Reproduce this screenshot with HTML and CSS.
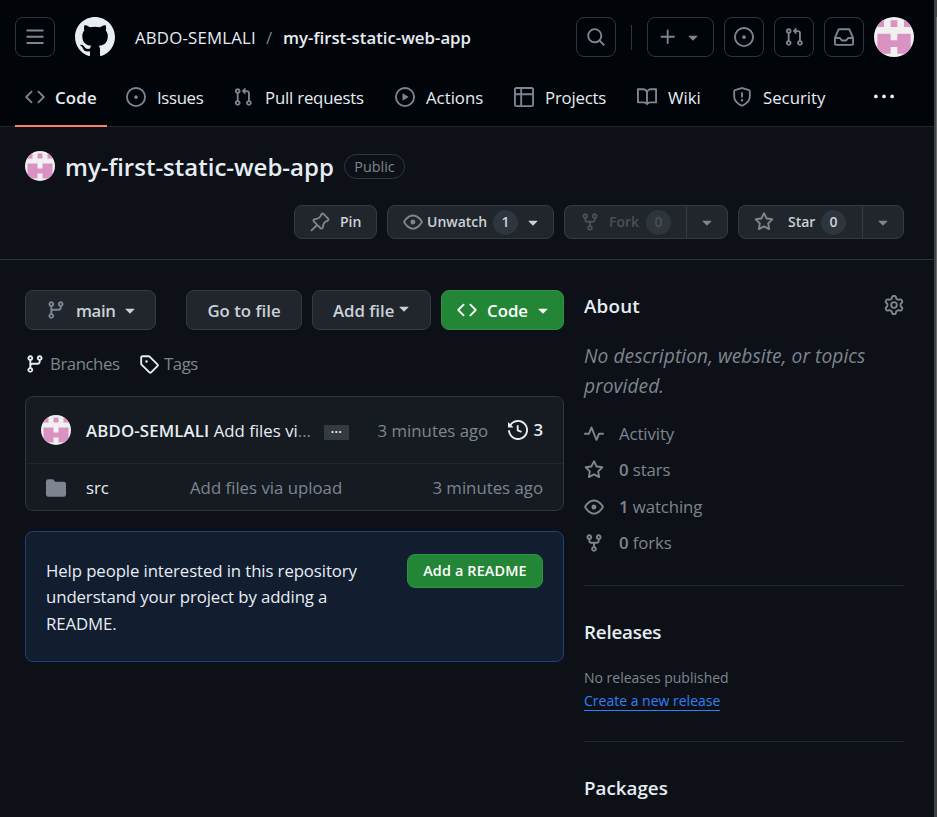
FILE: index.html
```html
<!DOCTYPE html>
<html lang="en">
<head>
<meta charset="utf-8">
<title>ABDO-SEMLALI/my-first-static-web-app</title>
<link rel="stylesheet" href="styles.css">
</head>
<body>
<svg class="sprite" aria-hidden="true">
  <symbol id="bars" viewBox="0 0 16 16"><path d="M1 2.75A.75.75 0 0 1 1.75 2h12.5a.75.75 0 0 1 0 1.5H1.75A.75.75 0 0 1 1 2.75Zm0 5A.75.75 0 0 1 1.75 7h12.5a.75.75 0 0 1 0 1.5H1.75A.75.75 0 0 1 1 7.75ZM1.75 12h12.5a.75.75 0 0 1 0 1.5H1.75a.75.75 0 0 1 0-1.5Z"/></symbol>
  <symbol id="mark" viewBox="0 0 16 16"><path d="M8 0c4.42 0 8 3.58 8 8a8.013 8.013 0 0 1-5.45 7.59c-.4.08-.55-.17-.55-.38 0-.27.01-1.13.01-2.2 0-.75-.25-1.23-.54-1.48 1.78-.2 3.65-.88 3.65-3.95 0-.88-.31-1.59-.82-2.15.08-.2.36-1.02-.08-2.12 0 0-.67-.22-2.2.82-.64-.18-1.32-.27-2-.27-.68 0-1.36.09-2 .27-1.53-1.03-2.2-.82-2.2-.82-.44 1.1-.16 1.92-.08 2.12-.51.56-.82 1.28-.82 2.15 0 3.06 1.86 3.75 3.64 3.95-.23.2-.44.55-.51 1.07-.46.21-1.61.55-2.33-.66-.15-.24-.6-.83-1.23-.82-.67.01-.27.38.01.53.34.19.73.9.82 1.13.16.45.68 1.31 2.69.94 0 .67.01 1.3.01 1.49 0 .21-.15.45-.55.38A7.995 7.995 0 0 1 0 8c0-4.42 3.58-8 8-8Z"/></symbol>
  <symbol id="search" viewBox="0 0 16 16"><path d="M10.68 11.74a6 6 0 0 1-7.922-8.982 6 6 0 0 1 8.982 7.922l3.04 3.04a.749.749 0 0 1-.326 1.275.749.749 0 0 1-.734-.215ZM11.5 7a4.499 4.499 0 1 0-8.997 0A4.499 4.499 0 0 0 11.5 7Z"/></symbol>
  <symbol id="plus" viewBox="0 0 16 16"><path d="M7.75 2a.75.75 0 0 1 .75.75V7h4.25a.75.75 0 0 1 0 1.5H8.5v4.25a.75.75 0 0 1-1.5 0V8.5H2.75a.75.75 0 0 1 0-1.5H7V2.75A.75.75 0 0 1 7.75 2Z"/></symbol>
  <symbol id="down" viewBox="0 0 16 16"><path d="m4.427 7.427 3.396 3.396a.25.25 0 0 0 .354 0l3.396-3.396A.25.25 0 0 0 11.396 7H4.604a.25.25 0 0 0-.177.427Z"/></symbol>
  <symbol id="issue" viewBox="0 0 16 16"><path d="M8 9.5a1.5 1.5 0 1 0 0-3 1.5 1.5 0 0 0 0 3Z"/><path d="M8 0a8 8 0 1 1 0 16A8 8 0 0 1 8 0ZM1.5 8a6.5 6.5 0 1 0 13 0 6.5 6.5 0 0 0-13 0Z"/></symbol>
  <symbol id="pr" viewBox="0 0 16 16"><path d="M1.5 3.25a2.25 2.25 0 1 1 3 2.122v5.256a2.251 2.251 0 1 1-1.5 0V5.372A2.25 2.25 0 0 1 1.5 3.25Zm5.677-.177L9.573.677A.25.25 0 0 1 10 .854V2.5h1A2.5 2.5 0 0 1 13.5 5v5.628a2.251 2.251 0 1 1-1.5 0V5a1 1 0 0 0-1-1h-1v1.646a.25.25 0 0 1-.427.177L7.177 3.427a.25.25 0 0 1 0-.354ZM3.75 2.5a.75.75 0 1 0 0 1.5.75.75 0 0 0 0-1.5Zm0 9.5a.75.75 0 1 0 0 1.5.75.75 0 0 0 0-1.5Zm8.25.75a.75.75 0 1 0 1.5 0 .75.75 0 0 0-1.5 0Z"/></symbol>
  <symbol id="inbox" viewBox="0 0 16 16"><path d="M2.8 2.06A1.75 1.75 0 0 1 4.41 1h7.18c.7 0 1.333.417 1.61 1.06l2.74 6.395c.04.093.06.194.06.295v4.5A1.75 1.75 0 0 1 14.25 15H1.75A1.75 1.75 0 0 1 0 13.25v-4.5c0-.101.02-.202.06-.295Zm1.61.44a.25.25 0 0 0-.23.152L1.887 8H4.75a.75.75 0 0 1 .6.3L6.625 10h2.75l1.275-1.7a.75.75 0 0 1 .6-.3h2.863L11.82 2.652a.25.25 0 0 0-.23-.152Zm10.09 7h-2.875l-1.275 1.7a.75.75 0 0 1-.6.3h-3.5a.75.75 0 0 1-.6-.3L4.375 9.5H1.5v3.75c0 .138.112.25.25.25h12.5a.25.25 0 0 0 .25-.25Z"/></symbol>
  <symbol id="code" viewBox="0 0 16 16"><path d="m11.28 3.22 4.25 4.25a.75.75 0 0 1 0 1.06l-4.25 4.25a.749.749 0 0 1-1.275-.326.749.749 0 0 1 .215-.734L13.94 8l-3.72-3.72a.749.749 0 0 1 .326-1.275.749.749 0 0 1 .734.215Zm-6.56 0a.751.751 0 0 1 1.042.018.751.751 0 0 1 .018 1.042L2.06 8l3.72 3.72a.749.749 0 0 1-.326 1.275.749.749 0 0 1-.734-.215L.47 8.53a.75.75 0 0 1 0-1.06Z"/></symbol>
  <symbol id="play" viewBox="0 0 16 16"><path d="M8 0a8 8 0 1 1 0 16A8 8 0 0 1 8 0ZM1.5 8a6.5 6.5 0 1 0 13 0 6.5 6.5 0 0 0-13 0Zm4.879-2.773 4.264 2.559a.25.25 0 0 1 0 .428l-4.264 2.559A.25.25 0 0 1 6 10.559V5.442a.25.25 0 0 1 .379-.215Z"/></symbol>
  <symbol id="table" viewBox="0 0 16 16"><path d="M0 1.75C0 .784.784 0 1.75 0h12.5C15.216 0 16 .784 16 1.75v12.5A1.75 1.75 0 0 1 14.25 16H1.75A1.75 1.75 0 0 1 0 14.25ZM6.5 6.5v8h7.75a.25.25 0 0 0 .25-.25V6.5Zm8-1.5V1.75a.25.25 0 0 0-.25-.25H6.5V5Zm-13 1.5v7.75c0 .138.112.25.25.25H5v-8ZM5 5V1.5H1.75a.25.25 0 0 0-.25.25V5Z"/></symbol>
  <symbol id="book" viewBox="0 0 16 16"><path d="M0 1.75A.75.75 0 0 1 .75 1h4.253c1.227 0 2.317.59 3 1.501A3.743 3.743 0 0 1 11.006 1h4.245a.75.75 0 0 1 .75.75v10.5a.75.75 0 0 1-.75.75h-4.507a2.25 2.25 0 0 0-1.591.659l-.622.621a.75.75 0 0 1-1.06 0l-.622-.621A2.25 2.25 0 0 0 5.258 13H.75a.75.75 0 0 1-.75-.75Zm7.251 10.324.004-5.073-.002-2.253A2.25 2.25 0 0 0 5.003 2.5H1.5v9h3.757a3.75 3.75 0 0 1 1.994.574ZM8.755 4.75l-.004 7.322a3.752 3.752 0 0 1 1.992-.572H14.5v-9h-3.495a2.25 2.25 0 0 0-2.25 2.25Z"/></symbol>
  <symbol id="shield" viewBox="0 0 16 16"><path d="M7.467.133a1.748 1.748 0 0 1 1.066 0l5.25 1.68A1.75 1.75 0 0 1 15 3.48V7c0 1.566-.32 3.182-1.303 4.682-.983 1.498-2.585 2.813-5.032 3.855a1.697 1.697 0 0 1-1.33 0c-2.447-1.042-4.049-2.357-5.032-3.855C1.32 10.182 1 8.566 1 7V3.48a1.75 1.75 0 0 1 1.217-1.667Zm.61 1.429a.25.25 0 0 0-.153 0l-5.25 1.68a.25.25 0 0 0-.174.238V7c0 1.358.275 2.666 1.057 3.86.784 1.194 2.121 2.34 4.366 3.297a.196.196 0 0 0 .154 0c2.245-.956 3.582-2.104 4.366-3.298C13.225 9.666 13.5 8.36 13.5 7V3.48a.251.251 0 0 0-.174-.237l-5.25-1.68ZM8.75 4.75v3a.75.75 0 0 1-1.5 0v-3a.75.75 0 0 1 1.5 0ZM9 10.5a1 1 0 1 1-2 0 1 1 0 0 1 2 0Z"/></symbol>
  <symbol id="kebab" viewBox="0 0 16 16"><circle cx="1.5" cy="7.5" r="1.5"/><circle cx="8" cy="7.5" r="1.5"/><circle cx="14.5" cy="7.5" r="1.5"/></symbol>
  <symbol id="pin" viewBox="0 0 16 16"><path d="m11.294.984 3.722 3.722a1.75 1.75 0 0 1-.504 2.826l-1.327.613a3.089 3.089 0 0 0-1.707 2.084l-.584 2.454c-.317 1.332-1.972 1.8-2.94.832L5.75 11.311 1.78 15.28a.749.749 0 1 1-1.06-1.06l3.969-3.97-2.204-2.204c-.968-.968-.5-2.623.832-2.94l2.454-.584a3.08 3.08 0 0 0 2.084-1.707l.613-1.327a1.75 1.75 0 0 1 2.826-.504ZM6.283 9.723l2.732 2.731a.25.25 0 0 0 .42-.119l.584-2.454a4.586 4.586 0 0 1 2.537-3.098l1.328-.613a.25.25 0 0 0 .072-.404l-3.722-3.722a.25.25 0 0 0-.404.072l-.613 1.328a4.584 4.584 0 0 1-3.098 2.537l-2.454.584a.25.25 0 0 0-.119.42l2.731 2.732Z"/></symbol>
  <symbol id="eye" viewBox="0 0 16 16"><path d="M8 2c1.981 0 3.671.992 4.933 2.078 1.27 1.091 2.187 2.345 2.637 3.023a1.62 1.62 0 0 1 0 1.798c-.45.678-1.367 1.932-2.637 3.023C11.67 13.008 9.981 14 8 14c-1.981 0-3.671-.992-4.933-2.078C1.797 10.83.88 9.576.43 8.898a1.62 1.62 0 0 1 0-1.798c.45-.677 1.367-1.931 2.637-3.022C4.33 2.992 6.019 2 8 2ZM1.679 7.932a.12.12 0 0 0 0 .136c.411.622 1.241 1.75 2.366 2.717C5.176 11.758 6.527 12.5 8 12.5c1.473 0 2.825-.742 3.955-1.715 1.124-.967 1.954-2.096 2.366-2.717a.12.12 0 0 0 0-.136c-.412-.621-1.242-1.75-2.366-2.717C10.824 4.242 9.473 3.5 8 3.5c-1.473 0-2.825.742-3.955 1.715-1.124.967-1.954 2.096-2.366 2.717ZM8 10a2 2 0 1 1-.001-3.999A2 2 0 0 1 8 10Z"/></symbol>
  <symbol id="fork" viewBox="0 0 16 16"><path d="M5 5.372v.878c0 .414.336.75.75.75h4.5a.75.75 0 0 0 .75-.75v-.878a2.25 2.25 0 1 1 1.5 0v.878a2.25 2.25 0 0 1-2.25 2.25h-1.5v2.128a2.251 2.251 0 1 1-1.5 0V8.5h-1.5A2.25 2.25 0 0 1 3.5 6.25v-.878a2.25 2.25 0 1 1 1.5 0ZM5 3.25a.75.75 0 1 0-1.5 0 .75.75 0 0 0 1.5 0Zm6.75.75a.75.75 0 1 0 0-1.5.75.75 0 0 0 0 1.5Zm-3 8.75a.75.75 0 1 0-1.5 0 .75.75 0 0 0 1.5 0Z"/></symbol>
  <symbol id="star" viewBox="0 0 16 16"><path d="M8 .25a.75.75 0 0 1 .673.418l1.882 3.815 4.21.612a.75.75 0 0 1 .416 1.279l-3.046 2.97.719 4.192a.751.751 0 0 1-1.088.791L8 12.347l-3.766 1.98a.75.75 0 0 1-1.088-.79l.72-4.194L.818 6.374a.75.75 0 0 1 .416-1.28l4.21-.611L7.327.668A.75.75 0 0 1 8 .25Zm0 2.445L6.615 5.5a.75.75 0 0 1-.564.41l-3.097.45 2.24 2.184a.75.75 0 0 1 .216.664l-.528 3.084 2.769-1.456a.75.75 0 0 1 .698 0l2.77 1.456-.53-3.084a.75.75 0 0 1 .216-.664l2.24-2.183-3.096-.45a.75.75 0 0 1-.564-.41L8 2.694Z"/></symbol>
  <symbol id="gear" viewBox="0 0 16 16"><path d="M8 0a8.2 8.2 0 0 1 .701.031C9.444.095 9.99.645 10.16 1.29l.288 1.107c.018.066.079.158.212.224.231.114.454.243.668.386.123.082.233.09.299.071l1.103-.303c.644-.176 1.392.021 1.82.63.27.385.506.792.704 1.218.315.675.111 1.422-.364 1.891l-.814.806c-.049.048-.098.147-.088.294.016.257.016.515 0 .772-.01.147.038.246.088.294l.814.806c.475.469.679 1.216.364 1.891a7.977 7.977 0 0 1-.704 1.217c-.428.61-1.176.807-1.82.63l-1.102-.302c-.067-.019-.177-.011-.3.071a5.909 5.909 0 0 1-.668.386c-.133.066-.194.158-.211.224l-.29 1.106c-.168.646-.715 1.196-1.458 1.26a8.006 8.006 0 0 1-1.402 0c-.743-.064-1.289-.614-1.458-1.26l-.289-1.106c-.018-.066-.079-.158-.212-.224a5.738 5.738 0 0 1-.668-.386c-.123-.082-.233-.09-.299-.071l-1.103.303c-.644.176-1.392-.021-1.82-.63a8.12 8.12 0 0 1-.704-1.218c-.315-.675-.111-1.422.363-1.891l.815-.806c.05-.048.098-.147.088-.294a6.214 6.214 0 0 1 0-.772c.01-.147-.038-.246-.088-.294l-.815-.806C.635 6.045.431 5.298.746 4.623a7.92 7.92 0 0 1 .704-1.217c.428-.61 1.176-.807 1.82-.63l1.102.302c.067.019.177.011.3-.071.214-.143.437-.272.668-.386.133-.066.194-.158.211-.224l.29-1.106C6.009.645 6.556.095 7.299.03 7.53.01 7.764 0 8 0Zm-.571 1.525c-.036.003-.108.036-.137.146l-.289 1.105c-.147.561-.549.967-.998 1.189-.173.086-.34.183-.5.29-.417.278-.97.423-1.529.27l-1.103-.303c-.109-.03-.175.016-.195.045-.22.312-.412.644-.573.99-.014.031-.021.11.059.19l.815.806c.411.406.562.957.53 1.456a4.709 4.709 0 0 0 0 .582c.032.499-.119 1.05-.53 1.456l-.815.806c-.081.08-.073.159-.059.19.162.346.353.677.573.989.02.03.085.076.195.046l1.102-.303c.56-.153 1.113-.008 1.53.27.161.107.328.204.501.29.447.222.85.629.997 1.189l.289 1.105c.029.109.101.143.137.146a6.6 6.6 0 0 0 1.142 0c.036-.003.108-.036.137-.146l.289-1.105c.147-.561.549-.967.998-1.189.173-.086.34-.183.5-.29.417-.278.97-.423 1.529-.27l1.103.303c.109.029.175-.016.195-.045.22-.313.411-.644.573-.99.014-.031.021-.11-.059-.19l-.815-.806c-.411-.406-.562-.957-.53-1.456a4.709 4.709 0 0 0 0-.582c-.032-.499.119-1.05.53-1.456l.815-.806c.081-.08.073-.159.059-.19a6.464 6.464 0 0 0-.573-.989c-.02-.03-.085-.076-.195-.046l-1.102.303c-.56.153-1.113.008-1.53-.27a4.44 4.44 0 0 0-.501-.29c-.447-.222-.85-.629-.997-1.189l-.289-1.105c-.029-.11-.101-.143-.137-.146a6.6 6.6 0 0 0-1.142 0ZM11 8a3 3 0 1 1-6 0 3 3 0 0 1 6 0ZM9.5 8a1.5 1.5 0 1 0-3.001.001A1.5 1.5 0 0 0 9.5 8Z"/></symbol>
  <symbol id="branch" viewBox="0 0 16 16"><path d="M9.5 3.25a2.25 2.25 0 1 1 3 2.122V6A2.5 2.5 0 0 1 10 8.5H6a1 1 0 0 0-1 1v1.128a2.251 2.251 0 1 1-1.5 0V5.372a2.25 2.25 0 1 1 1.5 0v1.836A2.493 2.493 0 0 1 6 7h4a1 1 0 0 0 1-1v-.628A2.25 2.25 0 0 1 9.5 3.25Zm-6 0a.75.75 0 1 0 1.5 0 .75.75 0 0 0-1.5 0Zm8.25-.75a.75.75 0 1 0 0 1.5.75.75 0 0 0 0-1.5ZM4.25 12a.75.75 0 1 0 0 1.5.75.75 0 0 0 0-1.5Z"/></symbol>
  <symbol id="tag" viewBox="0 0 16 16"><path d="M1 7.775V2.75C1 1.784 1.784 1 2.75 1h5.025c.464 0 .91.184 1.238.513l6.25 6.25a1.75 1.75 0 0 1 0 2.474l-5.026 5.026a1.75 1.75 0 0 1-2.474 0l-6.25-6.25A1.752 1.752 0 0 1 1 7.775Zm1.5 0c0 .066.026.13.073.177l6.25 6.25a.25.25 0 0 0 .354 0l5.025-5.025a.25.25 0 0 0 0-.354l-6.25-6.25a.25.25 0 0 0-.177-.073H2.75a.25.25 0 0 0-.25.25ZM6 5a1 1 0 1 1 0 2 1 1 0 0 1 0-2Z"/></symbol>
  <symbol id="history" viewBox="0 0 16 16"><path d="m.427 1.927 1.215 1.215a8.002 8.002 0 1 1-1.6 5.685.75.75 0 1 1 1.493-.154 6.5 6.5 0 1 0 1.18-4.458l1.358 1.358A.25.25 0 0 1 3.896 6H.25A.25.25 0 0 1 0 5.75V2.104a.25.25 0 0 1 .427-.177ZM7.75 4a.75.75 0 0 1 .75.75v2.992l2.028.812a.75.75 0 0 1-.557 1.392l-2.5-1A.751.751 0 0 1 7 8.25v-3.5A.75.75 0 0 1 7.75 4Z"/></symbol>
  <symbol id="folder" viewBox="0 0 16 16"><path d="M1.75 1A1.75 1.75 0 0 0 0 2.75v10.5C0 14.216.784 15 1.75 15h12.5A1.75 1.75 0 0 0 16 13.25v-8.5A1.75 1.75 0 0 0 14.25 3H7.5a.25.25 0 0 1-.2-.1l-.9-1.2C6.07 1.26 5.55 1 5 1H1.75Z"/></symbol>
  <symbol id="pulse" viewBox="0 0 16 16"><path d="M6 2c.306 0 .582.187.696.471L10 10.731l1.304-3.26A.751.751 0 0 1 12 7h3.25a.75.75 0 0 1 0 1.5h-2.742l-1.812 4.528a.751.751 0 0 1-1.392 0L6 4.77 4.696 8.03A.75.75 0 0 1 4 8.5H.75a.75.75 0 0 1 0-1.5h2.742l1.812-4.529A.751.751 0 0 1 6 2Z"/></symbol>
  <symbol id="avatar" viewBox="0 0 12 12"><path fill="#f0f0f0" d="M0 0h12v12H0z"/><path fill="#d992c1" d="M1 1h2v2H1zM5 1h2v2H5zM9 1h2v2H9zM1 5h4v2h2V5h4v6H7V9H5v2H1z"/></symbol>
</svg>

<div class="page">
  <header class="header">
    <div class="topbar">
      <button class="hbtn"><svg class="icon"><use href="#bars"/></svg></button>
      <svg class="logo"><use href="#mark"/></svg>
      <div class="crumbs"><span class="owner">ABDO-SEMLALI</span><span class="slash">/</span><b class="repo">my-first-static-web-app</b></div>
      <button class="hbtn search"><svg class="icon"><use href="#search"/></svg></button>
      <span class="vline"></span>
      <button class="hbtn create"><svg class="icon"><use href="#plus"/></svg><svg class="icon"><use href="#down"/></svg></button>
      <button class="hbtn"><svg class="icon"><use href="#issue"/></svg></button>
      <button class="hbtn"><svg class="icon"><use href="#pr"/></svg></button>
      <button class="hbtn"><svg class="icon"><use href="#inbox"/></svg></button>
      <svg class="avatar lg"><use href="#avatar"/></svg>
    </div>
    <nav class="tabs">
      <a class="tab active"><svg class="icon"><use href="#code"/></svg><b>Code</b></a>
      <a class="tab tight"><svg class="icon"><use href="#issue"/></svg><span>Issues</span></a>
      <a class="tab snug pulls"><svg class="icon"><use href="#pr"/></svg><span>Pull requests</span></a>
      <a class="tab"><svg class="icon"><use href="#play"/></svg><span>Actions</span></a>
      <a class="tab snug"><svg class="icon"><use href="#table"/></svg><span>Projects</span></a>
      <a class="tab"><svg class="icon"><use href="#book"/></svg><span>Wiki</span></a>
      <a class="tab"><svg class="icon"><use href="#shield"/></svg><span>Security</span></a>
      <a class="tab more"><svg class="icon"><use href="#kebab"/></svg></a>
    </nav>
  </header>

  <section class="repohead">
    <div class="titlerow">
      <svg class="avatar"><use href="#avatar"/></svg>
      <h1>my-first-static-web-app</h1>
      <span class="pill">Public</span>
    </div>
    <div class="actions">
      <button class="btn sm pin"><svg class="icon"><use href="#pin"/></svg><b>Pin</b></button>
      <button class="btn sm watch"><svg class="icon"><use href="#eye"/></svg><b>Unwatch</b><i class="count">1</i><svg class="icon caret"><use href="#down"/></svg></button>
      <div class="split forks"><button class="btn sm off"><svg class="icon"><use href="#fork"/></svg><b>Fork</b><i class="count">0</i></button><button class="btn sm drop"><svg class="icon"><use href="#down"/></svg></button></div>
      <div class="split stars"><button class="btn sm"><svg class="icon"><use href="#star"/></svg><b>Star</b><i class="count">0</i></button><button class="btn sm drop"><svg class="icon"><use href="#down"/></svg></button></div>
    </div>
  </section>

  <div class="content">
    <main class="main">
      <div class="filebar">
        <button class="btn ref"><svg class="icon"><use href="#branch"/></svg><b>main</b><svg class="icon caret"><use href="#down"/></svg></button>
        <button class="btn goto"><b>Go to file</b></button>
        <button class="btn add"><b>Add file</b><svg class="icon caret"><use href="#down"/></svg></button>
        <button class="btn green get"><svg class="icon"><use href="#code"/></svg><b>Code</b><svg class="icon"><use href="#down"/></svg></button>
      </div>
      <div class="refs">
        <a><svg class="icon"><use href="#branch"/></svg><span>Branches</span></a>
        <a><svg class="icon"><use href="#tag"/></svg><span>Tags</span></a>
      </div>
      <div class="files">
        <div class="commit">
          <svg class="avatar"><use href="#avatar"/></svg>
          <div class="msg"><b>ABDO-SEMLALI</b> <span>Add files vi</span><span class="muted">...</span></div>
          <button class="dots"><b>…</b></button>
          <span class="when muted">3 minutes ago</span>
          <a class="hist"><svg class="icon"><use href="#history"/></svg><b>3</b></a>
        </div>
        <div class="file">
          <svg class="icon"><use href="#folder"/></svg>
          <span class="name">src</span>
          <span class="desc muted">Add files via upload</span>
          <span class="muted">3 minutes ago</span>
        </div>
      </div>
      <div class="readme">
        <p>Help people interested in this repository<br>understand your project by adding a<br>README.</p>
        <button class="btn sm green"><b>Add a README</b></button>
      </div>
    </main>
    <aside class="side">
      <section class="about">
        <div class="sidehead"><h2>About</h2><svg class="icon"><use href="#gear"/></svg></div>
        <p class="nodesc">No description, website, or topics<br>provided.</p>
        <ul>
          <li><svg class="icon"><use href="#pulse"/></svg><span>Activity</span></li>
          <li><svg class="icon"><use href="#star"/></svg><span><b>0</b> stars</span></li>
          <li><svg class="icon"><use href="#eye"/></svg><span><b>1</b> watching</span></li>
          <li><svg class="icon"><use href="#fork"/></svg><span><b>0</b> forks</span></li>
        </ul>
      </section>
      <section class="releases">
        <h2>Releases</h2>
        <p>No releases published</p>
        <a class="link">Create a new release</a>
      </section>
      <section class="packages"><h2>Packages</h2></section>
    </aside>
  </div>
</div>
<div class="scroll"><div class="thumb"></div></div>
</body>
</html>
```
FILE: styles.css
```css
* { box-sizing: border-box; }

body {
  margin: 0;
  display: flex;
  height: 817px;
  overflow: hidden;
  background: #0d1117;
  color: #e6edf3;
  font: 16.8px/26px "Open Sans", "Noto Sans", sans-serif;
}

b, h1, h2 { font-weight: 600; }
h1, h2, p, ul { margin: 0; padding: 0; }
ul { list-style: none; }
button { font: inherit; color: inherit; padding: 0; margin: 0; background: none; border: 0; }

.sprite { position: absolute; width: 0; height: 0; }
.icon { width: 20px; height: 20px; flex: none; fill: #7d8590; display: block; }
.muted { color: #7d8590; }
.avatar { width: 30px; height: 30px; border-radius: 50%; flex: none; display: block; }
.avatar.lg { width: 40px; height: 40px; }

.page { width: 934px; flex: none; white-space: nowrap; }
.scroll { width: 3px; height: 817px; background: #424242; padding: 17px 0 0 2px; }
.thumb { height: 573px; background: #686868; }

.header { height: 127px; background: #010409; border-bottom: 1px solid #21262d; padding-top: 17px; }
.topbar { display: flex; align-items: center; height: 40px; padding: 0 20px 0 15px; gap: 10px; }
.hbtn { width: 40px; height: 40px; flex: none; border: 1px solid #30363d; border-radius: 8px; display: flex; align-items: center; justify-content: center; }
.logo { width: 40px; height: 40px; fill: #e6edf3; margin: 0 10px; flex: none; }
.crumbs { display: flex; flex: 1; padding-top: 1px; }
.owner { width: 131px; letter-spacing: .2px; }
.slash { width: 17px; color: #7d8590; }
.vline { width: 1px; height: 25px; background: #30363d; margin: 0 5px; }
.create { width: 67px; gap: 5px; }

.tabs { display: grid; grid-template-columns: 101px 107px 162px 119px 123px 95px 142px 40px; padding-left: 15px; margin-top: 20px; height: 50px; }
.tab { display: flex; align-items: center; gap: 11px; padding-left: 10px; height: 40px; }
.tab span, .tab b { padding-top: 1px; }
.tab.active { width: 92px; height: 50px; padding-bottom: 8px; gap: 10px; letter-spacing: .2px; border-bottom: 2px solid #f78166; }
.tight { letter-spacing: -.35px; }
.snug { letter-spacing: -.2px; }
.pulls { gap: 12px; }
.more .icon { fill: #e6edf3; }

.repohead { height: 133px; padding: 24px 30px 0 25px; border-bottom: 1px solid #30363d; }
.titlerow { display: flex; align-items: center; height: 30px; }
h1 { font-size: 24px; line-height: 30px; padding-top: 1px; margin-left: 10px; width: 279px; }
.pill { width: 61px; height: 25px; border: 1px solid #30363d; border-radius: 13px; font-size: 14.4px; line-height: 23px; color: #7d8590; text-align: center; }
.actions { display: flex; justify-content: flex-end; gap: 10px; margin-top: 24px; }

.btn { height: 40px; display: flex; align-items: center; flex: none; background: #21262d; border: 1px solid #363b42; border-radius: 8px; color: #c9d1d9; }
.btn.sm { height: 34px; font-size: 14px; }
.green { background: #238636; border-color: #2f9142; color: #fff; }
.green .icon { fill: #fff; }
.green.sm { font-size: 14.4px; letter-spacing: .15px; }
.caret { fill: #c9d1d9; }
.count { width: 25px; height: 25px; border-radius: 50%; background: #2f353c; font-style: normal; font-weight: 600; line-height: 24px; text-align: center; }
.pin { width: 83px; padding-left: 15px; }
.pin b { margin-left: 10px; }
.watch { width: 167px; padding-left: 15px; }
.watch b { width: 66px; margin-left: 4px; text-align: left; }
.watch .caret { margin-left: 5px; }
.split { display: flex; }
.split b { text-align: left; }
.split .btn { padding-left: 15px; }
.split .btn:first-child { border-radius: 8px 0 0 8px; border-right: 0; }
.split .drop { width: 42px; padding-left: 10px; border-radius: 0 8px 8px 0; }
.forks .btn:first-child { width: 122px; }
.forks b { width: 37px; margin-left: 9px; }
.stars .btn:first-child { width: 124px; }
.stars b { width: 33px; margin-left: 14px; }
.off { color: #484f58; }
.off .icon { fill: #484f58; }

.content { display: flex; gap: 20px; padding: 30px 30px 0 25px; }
.main { width: 539px; flex: none; }
.filebar { display: flex; gap: 10px; }
.filebar b { padding-top: 1px; text-align: left; }
.ref { width: 131px; margin-right: 20px; padding-left: 20px; }
.ref b { width: 43px; margin-left: 10px; letter-spacing: -.4px; }
.ref .caret { margin-left: 1px; }
.goto { width: 116px; justify-content: center; }
.add { width: 119px; padding-left: 20px; }
.add .caret { margin: -4px 0 0 0; }
.get { width: 123px; padding-left: 15px; }
.get b { margin-left: 10px; width: 46px; }

.refs { display: flex; margin-top: 21px; height: 26px; color: #7d8590; letter-spacing: -.45px; }
.refs a { display: flex; align-items: center; width: 114px; gap: 5px; }
.refs .icon { fill: #e6edf3; }

.files { margin-top: 19px; height: 115px; border: 1px solid #30363d; border-radius: 8px; background: #161b22; }
.commit { display: flex; align-items: center; height: 67px; padding: 0 20px 0 15px; border-bottom: 1px solid #21262d; }
.msg { width: 238px; margin-left: 15px; padding-top: 1px; }
.msg b { letter-spacing: .15px; }
.dots { width: 25px; height: 15px; margin-top: 4px; background: #343a42; border-radius: 1px; font-size: 14px; line-height: 6px; color: #e6edf3; }
.dots b { display: block; height: 15px; }
.when { margin-left: 29px; width: 130px; padding-top: 1px; }
.hist { display: flex; gap: 5px; align-items: center; margin-left: 1px; }
.hist .icon { fill: #e6edf3; }
.file { display: flex; align-items: center; height: 48px; padding: 0 20px; }
.name { width: 104px; margin-left: 20px; }
.desc { flex: 1; }

.readme { display: flex; justify-content: space-between; align-items: flex-start; margin-top: 20px; height: 131px; padding: 22px 20px; background: #121d2f; border: 1px solid #1c4279; border-radius: 8px; }
.readme p { padding-top: 4px; line-height: 26.3px; letter-spacing: -.1px; }
.readme .btn { width: 136px; justify-content: center; }

.side { width: 320px; }
h2 { font-size: 18.8px; line-height: 30px; }
.sidehead { display: flex; justify-content: space-between; align-items: center; }
.sidehead h2 { padding-top: 1px; letter-spacing: .2px; margin-bottom: -1px; }
.about { height: 296px; border-bottom: 1px solid #21262d; }
.nodesc { margin-top: 21px; font-size: 19.2px; line-height: 30px; letter-spacing: .05px; font-style: italic; color: #7d8590; }
.about ul { margin-top: 20px; color: #7d8590; letter-spacing: -.1px; }
.about li { display: flex; align-items: center; gap: 15px; height: 26px; margin-bottom: 10.4px; }
.releases { height: 156px; padding-top: 31px; border-bottom: 1px solid #21262d; font-size: 14px; line-height: 23px; }
.releases h2 { letter-spacing: -.2px; }
.releases p { margin-top: 19px; color: #7d8590; }
.link { color: #2f81f7; border-bottom: 1px solid #2f81f7; }
.packages { padding-top: 31px; }
```
